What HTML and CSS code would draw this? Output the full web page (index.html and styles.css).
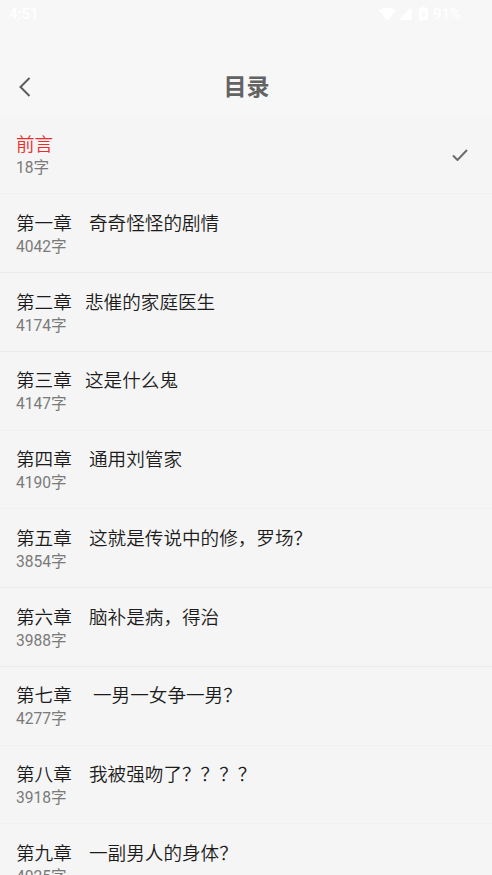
FILE: index.html
```html
<!DOCTYPE html>
<html lang="zh-CN">
<head>
<meta charset="utf-8">
<title>目录</title>
<link rel="stylesheet" href="styles.css">
</head>
<body>
<header class="top">
  <div class="status">
    <span>4:51</span>
    <div class="status-icons">
      <svg class="wifi" viewBox="0 0 18 14"><path d="M0 3.500C5-1 13-1 18 3.500L9 14Z"/></svg>
      <svg class="signal" viewBox="0 0 14 14"><path d="M14 0V14H0Z"/></svg>
      <svg class="battery" viewBox="0 0 10 15"><path fill-rule="evenodd" d="M3 0h4v1.500h3V15H0V1.500h3ZM5.800 3.500 2.500 9h2v3.800L7.700 7.200h-2Z"/></svg>
      <span>91%</span>
    </div>
  </div>
  <nav class="bar">
    <svg class="back" viewBox="0 0 12 20"><path d="M10.500 1 1.500 10l9 9"/></svg>
    <h1>目录</h1>
  </nav>
</header>
<main class="list">
  <section class="row faint current"><div><h2>前言</h2><p>18字</p></div><svg class="check" viewBox="0 0 16 12"><path d="M1 6.500 5.500 11 15 1"/></svg></section>
  <section class="row"><div><h2><span class="num">第一章</span>奇奇怪怪的剧情</h2><p>4042字</p></div></section>
  <section class="row"><div><h2><span class="num narrow">第二章</span>悲催的家庭医生</h2><p>4174字</p></div></section>
  <section class="row faint"><div><h2><span class="num narrow">第三章</span>这是什么鬼</h2><p>4147字</p></div></section>
  <section class="row faint"><div><h2><span class="num">第四章</span>通用刘管家</h2><p>4190字</p></div></section>
  <section class="row"><div><h2><span class="num">第五章</span>这就是传说中的修，罗场？</h2><p>3854字</p></div></section>
  <section class="row"><div><h2><span class="num">第六章</span>脑补是病，得治</h2><p>3988字</p></div></section>
  <section class="row faint"><div><h2><span class="num wide">第七章</span>一男一女争一男？</h2><p>4277字</p></div></section>
  <section class="row faint"><div><h2><span class="num">第八章</span>我被强吻了？？？？</h2><p>3918字</p></div></section>
  <section class="row"><div><h2><span class="num">第九章</span>一副男人的身体？</h2><p>4025字</p></div></section>
</main>
</body>
</html>
```

FILE: styles.css
```css
* { box-sizing: border-box; margin: 0; padding: 0; }
body { height: 875px; overflow: hidden; background: #f5f5f5; color: #1c1c1c; font-family: Roboto, "Noto Sans CJK SC", sans-serif; }
svg { display: block; }
.top { height: 115.500px; background: #f7f7f7; }
.status { display: flex; justify-content: space-between; height: 28px; padding: 0 31px 0 9px; line-height: 28px; font-size: 15px; font-weight: 500; color: #fff; }
.status-icons { display: flex; align-items: center; fill: #fff; }
.wifi { width: 17px; height: 14px; margin: -1px 2px 0 0; }
.signal { width: 14px; height: 13px; margin: -1px 7px 0 0; }
.battery { width: 9px; height: 15px; margin: -2px 5px 0 0; }
.bar { display: grid; grid-template-columns: 52px 1fr 52px; align-items: center; height: 87px; padding-top: 30px; }
.back { width: 12px; height: 20px; margin-left: 19px; fill: none; stroke: #5c5c5c; stroke-width: 2; }
h1 { padding: 3px 0 0 1px; text-align: center; font-size: 23px; line-height: 34px; font-weight: 700; color: #636363; }
.row { display: flex; justify-content: space-between; height: 78.750px; padding: 16.500px 24px 0 16px; border-bottom: 1px solid #ebebeb; }
.faint { border-bottom-color: #f1f1f1; }
h2 { font-size: 18.600px; line-height: 27px; font-weight: 350; white-space: pre; }
p { margin-top: -1px; font-size: 15.600px; line-height: 20px; color: #7a7a7a; }
.current h2 { color: #ef2b2b; }
.num { display: inline-block; width: 73px; }
.narrow { width: 69px; }
.wide { width: 77px; }
.check { width: 16px; height: 12px; margin-top: 16.500px; fill: none; stroke: #6c6c6c; stroke-width: 2; }
```
